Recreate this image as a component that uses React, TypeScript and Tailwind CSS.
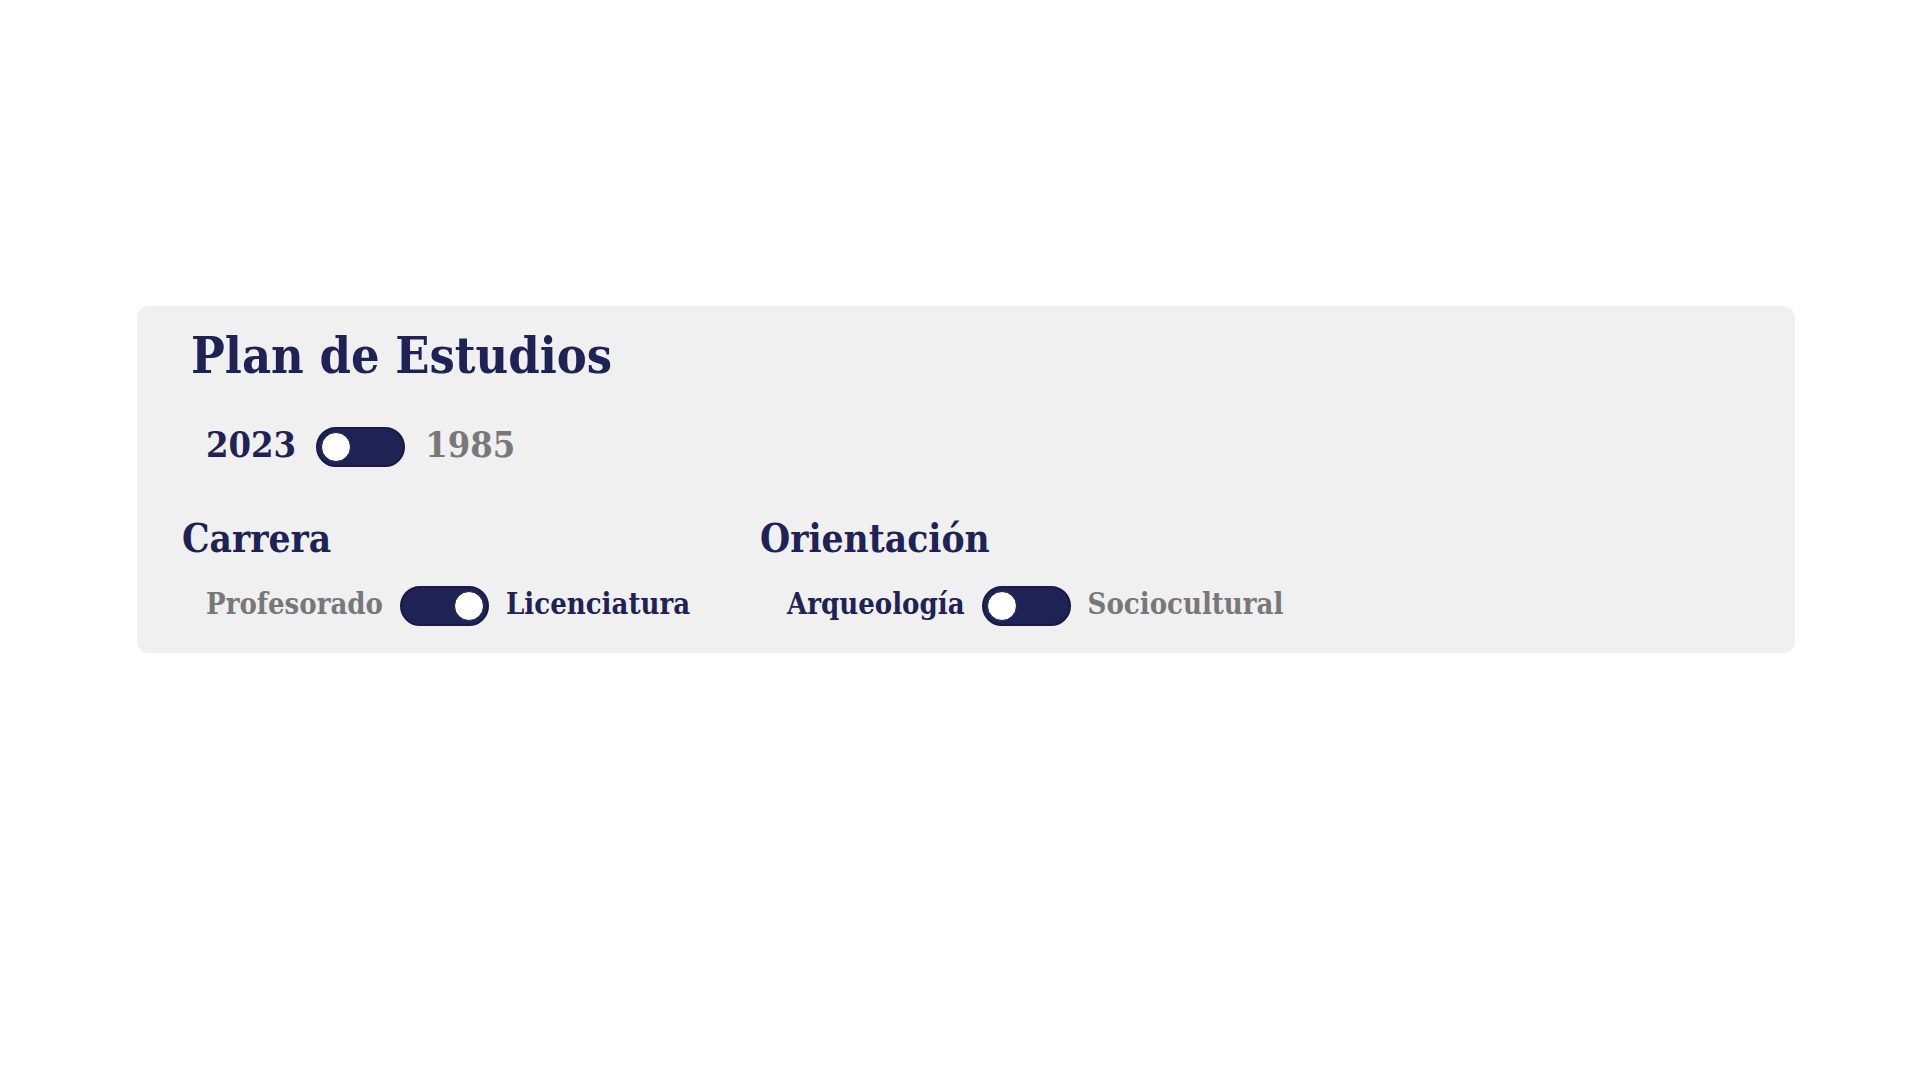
import React from 'react';

const font = { fontFamily: '"DejaVu Serif Condensed", "DejaVu Serif", serif' };

interface ToggleProps {
  on?: boolean;
}

const Toggle: React.FC<ToggleProps> = ({ on = false }) => (
  <div
    className={`flex h-10 w-[89px] shrink-0 items-center rounded-full border-2 border-[#181b45] bg-[#1e2254] px-[3px] ${
      on ? 'justify-end' : 'justify-start'
    }`}
  >
    <div className="h-[30px] w-[30px] rounded-full border border-[#181b45] bg-white" />
  </div>
);

interface SwitchRowProps {
  left: string;
  right: string;
  on?: boolean;
  size: string;
}

const SwitchRow: React.FC<SwitchRowProps> = ({ left, right, on = false, size }) => (
  <div className={`flex h-10 items-center font-bold leading-none ${size}`}>
    <span className={on ? 'text-[#787878]' : 'text-[#1e2254]'}>{left}</span>
    <Toggle on={on} />
    <span className={on ? 'text-[#1e2254]' : 'text-[#787878]'}>{right}</span>
  </div>
);

export default function App() {
  return (
    <div className="min-h-screen w-full bg-white pt-[306px]" style={font}>
      <div className="ml-[137px] h-[347px] w-[1658px] rounded-xl bg-[#f0f0f0] pt-[25px]">
        <h1 className="ml-[54px] text-[50px] font-bold leading-none text-[#1e2254]">Plan de Estudios</h1>

        <div className="ml-[69px] mt-[46px]">
          <SwitchRow left="2023" right="1985" size="gap-[20px] text-[36px] [&>span]:-mt-[6px]" />
        </div>

        <div className="ml-[45px] mt-[53px] flex">
          {/* Carrera */}
          <div className="w-[578px] shrink-0">
            <h2 className="text-[38.5px] font-bold leading-none text-[#1e2254]">Carrera</h2>
            <div className="ml-[24px] mt-[27px]">
              <SwitchRow left="Profesorado" right="Licenciatura" on size="gap-[17px] text-[29px] [&>span]:-mt-[3px]" />
            </div>
          </div>

          {/* Orientación */}
          <div>
            <h2 className="text-[38.5px] font-bold leading-none text-[#1e2254]">Orientación</h2>
            <div className="ml-[27px] mt-[27px]">
              <SwitchRow left="Arqueología" right="Sociocultural" size="gap-[17px] text-[29px] [&>span]:-mt-[3px]" />
            </div>
          </div>
        </div>
      </div>
    </div>
  );
}
